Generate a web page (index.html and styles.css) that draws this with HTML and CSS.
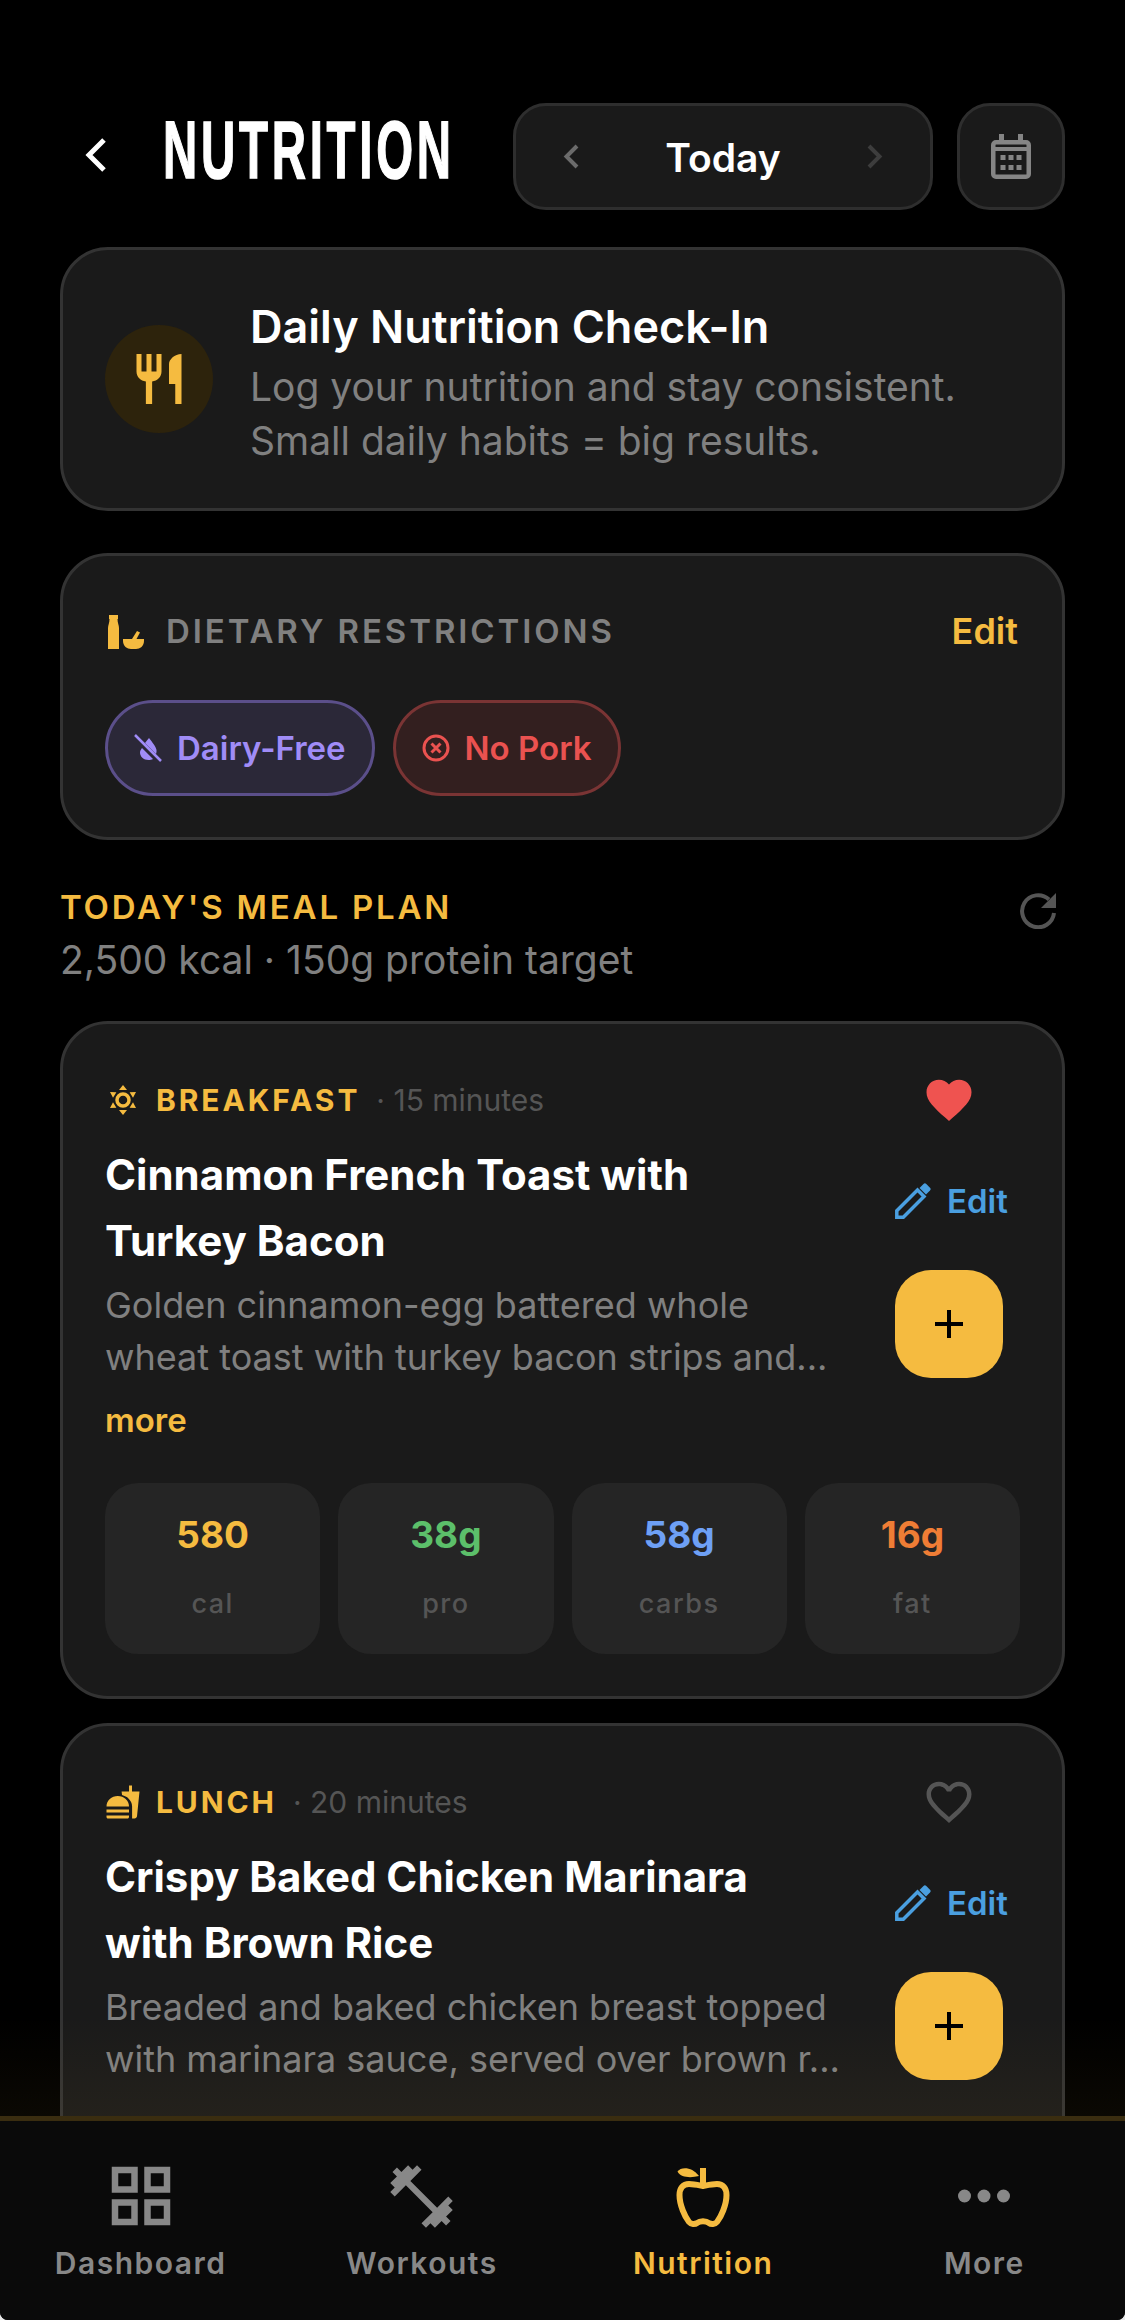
FILE: index.html
```html
<!DOCTYPE html>
<html lang="en">
<head>
<meta charset="utf-8">
<title>Nutrition</title>
<link rel="stylesheet" href="styles.css">
</head>
<body>
<div class="app">
  <main class="main">
    <header class="header">
      <svg class="back" viewBox="0 0 21 34"><path d="M19 2 4 17l15 15"/></svg>
      <div class="page-title"><h1>NUTRITION</h1></div>
      <div class="date-pill">
        <svg class="chev" viewBox="0 0 16 25"><path d="M14 2 3.500 12.500 14 23"/></svg>
        <span class="today">Today</span>
        <svg class="chev chev-off" viewBox="0 0 16 25"><path d="M2 2l10.500 10.500L2 23"/></svg>
      </div>
      <div class="cal-btn">
        <svg class="cal" viewBox="0 0 40 45"><path class="cal-fill" d="M8 0h5v6h14V0h5v6h3a5 5 0 0 1 5 5v29a5 5 0 0 1-5 5H5a5 5 0 0 1-5-5V11a5 5 0 0 1 5-5h3zM4.500 17v23a.5.5 0 0 0 .5.5h30a.5.5 0 0 0 .5-.5V17zM5 10.500a.5.5 0 0 0-.5.5v2h31v-2a.5.5 0 0 0-.5-.5z"/><path class="cal-fill" d="M9.500 21h5v5h-5zM17.500 21h5v5h-5zM25.500 21h5v5h-5zM9.500 31h5v5h-5zM17.500 31h5v5h-5zM25.500 31h5v5h-5z"/></svg>
      </div>
    </header>

    <section class="card checkin">
      <div class="checkin-icon">
        <svg class="fork" viewBox="0 0 24 24"><path d="M11 9H9V2H7v7H5V2H3v7c0 2.120 1.660 3.840 3.750 3.970V22h2.500v-9.030C11.340 12.840 13 11.120 13 9V2h-2v7zm5-3v8h2.500v8H21V2c-2.760 0-5 2.240-5 4z"/></svg>
      </div>
      <div>
        <h2 class="checkin-title">Daily Nutrition Check-In</h2>
        <p class="checkin-sub">Log your nutrition and stay consistent.<br>Small daily habits = big results.</p>
      </div>
    </section>

    <section class="card diet">
      <div class="diet-head">
        <svg class="diet-icon" viewBox="0 0 36 34"><path d="M1 0h9v4h-.5c0 4 1.500 6 1.500 9v21H0V13c0-3 1.500-5 1.500-9H1z"/><path d="M15 24h21v2c0 5-4 8-8 8h-5c-4 0-8-3-8-8z"/><path d="M24 24l5-8 3 1.500-3.500 6.500z"/></svg>
        <span class="diet-label">DIETARY RESTRICTIONS</span>
        <span class="diet-edit">Edit</span>
      </div>
      <div class="chips">
        <span class="chip chip-purple">
          <svg class="chip-icon" viewBox="0 0 28 28"><path class="drop" d="M15 4c3 4 7 8.500 7.500 12 .2 1.500 0 2.800-.5 4L11 9c1.200-1.700 2.700-3.300 4-5zM8 14l11 11c-1.300.8-2.800 1-4.500 1C9.500 26 6 22.500 6 18.500c0-1.500.8-3 2-4.500z"/><path class="slash" d="M1 1l26 26"/></svg>
          Dairy-Free
        </span>
        <span class="chip chip-red">
          <svg class="chip-icon" viewBox="0 0 28 28"><circle class="ring" cx="14" cy="14" r="12"/><path class="cross" d="M9.500 9.500l9 9M18.500 9.500l-9 9"/></svg>
          No Pork
        </span>
      </div>
    </section>

    <div class="plan-head">
      <div>
        <h3 class="plan-title">TODAY'S MEAL PLAN</h3>
        <p class="plan-sub">2,500 kcal · 150g protein target</p>
      </div>
      <svg class="refresh" viewBox="0 0 36 36"><path class="refresh-arc" d="M29 6.500A16 16 0 1 0 34 20"/><path class="refresh-tip" d="M36 0v15H21z"/></svg>
    </div>

    <article class="card meal">
      <div class="meal-top">
        <div class="meal-body">
          <div class="meal-tag">
            <svg class="tag-icon" viewBox="0 0 30 30">
              <circle class="sun-ring" cx="15" cy="15" r="6"/>
              <path class="sun-ray" d="M15 0l4 5h-8zM15 30l-4-5h8zM2 7l6.400.3-3.400 5.400zM28 7l-3 5.700-3.400-5.400zM2 23l3-5.700 3.400 5.400zM28 23l-6.400-.3 3.400-5.400z"/>
            </svg>
            <span class="tag-name">BREAKFAST</span>
            <span class="tag-time">· 15 minutes</span>
          </div>
          <h4 class="meal-title">Cinnamon French Toast with Turkey Bacon</h4>
          <p class="meal-desc">Golden cinnamon-egg battered whole wheat toast with turkey bacon strips and...</p>
          <span class="more">more</span>
        </div>
        <div class="meal-actions">
          <div class="heart-box"><svg class="heart heart-on" viewBox="0 0 24 24"><path d="M12 21.350l-1.450-1.320C5.400 15.360 2 12.280 2 8.500 2 5.420 4.420 3 7.500 3c1.740 0 3.410.810 4.500 2.090C13.090 3.810 14.760 3 16.500 3 19.580 3 22 5.420 22 8.500c0 3.780-3.400 6.860-8.550 11.540L12 21.350z"/></svg></div>
          <div class="meal-edit">
            <svg class="pencil" viewBox="0 0 36 36"><path class="pencil-body" d="M1.800 34.200v-6.500L22.500 7l6.500 6.500-20.700 20.700z"/><path class="pencil-cap" d="M24.500 5 28.500 1a2 2 0 0 1 2.800 0l3.700 3.700a2 2 0 0 1 0 2.800L31 11.500z"/></svg>
            <span>Edit</span>
          </div>
          <button class="add" type="button"><svg class="plus" viewBox="0 0 28 28"><path d="M14 0v28M0 14h28"/></svg></button>
        </div>
      </div>
      <div class="macros">
        <div class="macro"><b class="v-cal">580</b><span>cal</span></div>
        <div class="macro"><b class="v-pro">38g</b><span>pro</span></div>
        <div class="macro"><b class="v-carb">58g</b><span>carbs</span></div>
        <div class="macro"><b class="v-fat">16g</b><span>fat</span></div>
      </div>
    </article>

    <article class="card meal meal-next">
      <div class="meal-top">
        <div class="meal-body">
          <div class="meal-tag">
            <svg class="tag-icon tag-icon-wide" viewBox="0 0 24 24"><path d="M18.060 23h1.660c.840 0 1.530-.640 1.630-1.460L23 5.050h-5V1h-1.970v4.050h-4.970l.300 2.340c1.710.470 3.310 1.310 4.270 2.260 1.440 1.420 2.430 2.890 2.430 5.290zM1 15c0-4 3.400-7 7.500-7s7.530 3 7.530 7zM1 17h15v2H1zM1 21h15v1c0 .550-.450 1-1 1H2c-.550 0-1-.450-1-1z"/></svg>
            <span class="tag-name">LUNCH</span>
            <span class="tag-time">· 20 minutes</span>
          </div>
          <h4 class="meal-title">Crispy Baked Chicken Marinara with Brown Rice</h4>
          <p class="meal-desc">Breaded and baked chicken breast topped with marinara sauce, served over brown r...</p>
          <span class="more">more</span>
        </div>
        <div class="meal-actions">
          <div class="heart-box"><svg class="heart heart-off" viewBox="0 0 24 24"><path d="M16.500 3c-1.740 0-3.410.810-4.500 2.090C10.910 3.810 9.240 3 7.500 3 4.420 3 2 5.420 2 8.500c0 3.780 3.400 6.860 8.550 11.540L12 21.350l1.450-1.320C18.600 15.360 22 12.280 22 8.500 22 5.420 19.580 3 16.500 3zm-4.400 15.550l-.1.100-.1-.1C7.140 14.240 4 11.390 4 8.500 4 6.500 5.500 5 7.500 5c1.540 0 3.040.990 3.570 2.360h1.870C13.460 5.990 14.960 5 16.500 5c2 0 3.500 1.500 3.500 3.500 0 2.890-3.140 5.740-7.900 10.050z"/></svg></div>
          <div class="meal-edit">
            <svg class="pencil" viewBox="0 0 36 36"><path class="pencil-body" d="M1.800 34.200v-6.500L22.500 7l6.500 6.500-20.700 20.700z"/><path class="pencil-cap" d="M24.500 5 28.500 1a2 2 0 0 1 2.800 0l3.700 3.700a2 2 0 0 1 0 2.800L31 11.500z"/></svg>
            <span>Edit</span>
          </div>
          <button class="add" type="button"><svg class="plus" viewBox="0 0 28 28"><path d="M14 0v28M0 14h28"/></svg></button>
        </div>
      </div>
    </article>

    <div class="fade"></div>
  </main>

  <nav class="nav">
    <div class="nav-item">
      <svg class="nav-icon" viewBox="0 0 24 24"><path d="M3 3v8h8V3H3zm6 6H5V5h4v4zm-6 4v8h8v-8H3zm6 6H5v-4h4v4zm4-16v8h8V3h-8zm6 6h-4V5h4v4zm-6 4v8h8v-8h-8zm6 6h-4v-4h4v4z"/></svg>
      <span>Dashboard</span>
    </div>
    <div class="nav-item">
      <svg class="nav-icon nav-icon-dumb" viewBox="0 0 24 24"><path d="M20.570 14.860L22 13.430 20.570 12 17 15.570 8.430 7 12 3.430 10.570 2 9.140 3.430 7.710 2 5.570 4.140 4.140 2.710 2.710 4.140l1.430 1.430L2 7.710l1.430 1.430L2 10.570 3.430 12 7 8.430 15.570 17 12 20.570 13.430 22l1.430-1.430L16.290 22l2.140-2.140 1.430 1.430 1.430-1.430-1.430-1.430L22 16.290z"/></svg>
      <span>Workouts</span>
    </div>
    <div class="nav-item nav-active">
      <svg class="nav-icon" viewBox="0 0 78 78"><path class="apple-leaf" d="M13.500 14.500C17 9.500 28 9.500 35 19C27 21 17 21 13.500 14.500z"/><path class="apple-stem" d="M39 11v18"/><path class="apple-body" d="M39 29C34 28 30 27 25 27C19 27 15.500 31 15.500 38C15.500 48 21 60 25 65C27 67.500 31 67.500 33 66C36 63.500 42 63.500 45 66C47 67.500 51 67.500 53 65C57 60 62.500 48 62.500 38C62.500 31 59 27 53 27C48 27 44 28 39 29Z"/></svg>
      <span>Nutrition</span>
    </div>
    <div class="nav-item">
      <svg class="nav-icon" viewBox="0 0 24 24"><circle cx="6" cy="12" r="2"/><circle cx="12" cy="12" r="2"/><circle cx="18" cy="12" r="2"/></svg>
      <span>More</span>
    </div>
  </nav>
</div>
</body>
</html>
```

FILE: styles.css
```css
* { box-sizing: border-box; margin: 0; padding: 0; }
html { background: #e8e8e8; }
body {
  width: 1125px;
  height: 2320px;
  background: #000;
  font-family: "Inter", "Liberation Sans", sans-serif;
  overflow: hidden;
  border-radius: 0 0 8px 8px;
}
.app { height: 2320px; display: flex; flex-direction: column; }
.main { flex: 1; min-height: 0; overflow: hidden; position: relative; padding: 103px 60px 0; }

/* header */
.header { display: flex; align-items: center; height: 107px; margin-bottom: 37px; }
.back { width: 21px; height: 34px; margin-left: 25px; margin-top: -4px; fill: none; stroke: #fff; stroke-width: 5; flex: none; }
.page-title { width: 350px; margin-left: 57px; flex: none; height: 107px; display: flex; align-items: center; margin-top: -13px; }
.page-title h1 {
  font-family: "Liberation Sans", sans-serif;
  font-weight: 700;
  font-size: 82px;
  line-height: 1;
  white-space: nowrap;
  letter-spacing: 6.500px;
  color: #fff;
  -webkit-text-stroke: 1.500px #fff;
  transform: scaleX(0.578);
  transform-origin: left center;
}
.date-pill {
  width: 420px; height: 107px; flex: none;
  display: flex; align-items: center; justify-content: space-between;
  padding: 0 47px;
  background: #1a1a1a; border: 3px solid #2e2e2e; border-radius: 33px;
}
.chev { width: 16px; height: 25px; fill: none; stroke: #6b6b6b; stroke-width: 4; }
.chev-off { stroke: #3d3d3d; }
.today { color: #fff; font-size: 39px; font-weight: 600; position: relative; top: 1px; }
.cal-btn {
  width: 108px; height: 107px; flex: none; margin-left: 24px;
  display: flex; align-items: center; justify-content: center;
  background: #1a1a1a; border: 3px solid #2e2e2e; border-radius: 33px;
}
.cal { width: 40px; height: 45px; fill: #858585; }

/* cards */
.card { background: #1a1a1a; border: 3px solid #333; border-radius: 48px; }
.checkin { display: flex; height: 264px; padding: 47px 42px 0; margin-bottom: 42px; }
.checkin-icon {
  width: 108px; height: 108px; flex: none; margin-top: 28px; margin-right: 37px;
  border-radius: 50%; background: #2d230c;
  display: flex; align-items: center; justify-content: center;
}
.fork { width: 60px; height: 60px; fill: #f5bb40; }
.checkin-title { color: #fff; font-size: 45px; font-weight: 600; line-height: 60px; }
.checkin-sub { color: #808080; font-size: 39px; line-height: 54px; margin-top: 3px; }

.diet { height: 287px; padding: 45px 42px 0; margin-bottom: 43px; }
.diet-head { display: flex; align-items: center; height: 60px; margin-bottom: 39px; }
.diet-icon { width: 36px; height: 34px; fill: #f5bb40; flex: none; margin-left: 3px; margin-top: 2px; }
.diet-label { color: #808080; font-size: 33px; font-weight: 600; letter-spacing: 2.900px; margin-left: 22px; }
.diet-edit { margin-left: auto; color: #f5bb40; font-size: 36px; font-weight: 600; margin-right: 2px; }
.chips { display: flex; gap: 18px; }
.chip {
  display: flex; align-items: center; height: 96px; padding: 0 26px;
  border-radius: 48px; border: 3px solid; font-size: 33px; font-weight: 600; gap: 15px;
}
.chip-icon { width: 28px; height: 28px; flex: none; }
.chip-purple { background: #2b2838; border-color: #5b4f8a; color: #a08cf7; }
.chip-purple .drop { fill: #a08cf7; }
.chip-purple .slash { stroke: #a08cf7; stroke-width: 2.500; }
.chip-red { background: #331f1f; border-color: #7a3434; color: #ea5250; }
.chip-red .ring { fill: none; stroke: #ea5250; stroke-width: 3; }
.chip-red .cross { fill: none; stroke: #ea5250; stroke-width: 3; }

.plan-head { display: flex; justify-content: space-between; align-items: flex-start; margin-bottom: 34px; }
.plan-title { color: #f5bb40; font-size: 33px; font-weight: 600; letter-spacing: 2.800px; line-height: 46px; position: relative; top: 1px; }
.plan-sub { color: #808080; font-size: 39px; line-height: 54px; margin-top: 4px; }
.refresh { width: 36px; height: 36px; margin-top: 10px; margin-right: 9px; }
.refresh-arc { fill: none; stroke: #555; stroke-width: 4; }
.refresh-tip { fill: #555; }

/* meal cards */
.meal { padding: 49px 42px 42px; margin-bottom: 24px; }
.meal-top { display: flex; }
.meal-body { width: 735px; flex: none; }
.meal-tag { display: flex; align-items: center; height: 54px; }
.tag-icon { width: 30px; height: 30px; fill: #f5bb40; margin-left: 3px; flex: none; }
.tag-icon-wide { width: 36px; height: 36px; margin-left: 0; margin-right: -3px; }
.sun-ring { fill: none; stroke: #f5bb40; stroke-width: 3.500; }
.sun-ray { fill: #f5bb40; }
.tag-name { color: #f5bb40; font-size: 30px; font-weight: 700; letter-spacing: 2.900px; margin-left: 18px; }
.tag-time { color: #555; font-size: 30px; margin-left: 16px; }
.meal-title { color: #fff; font-size: 42px; font-weight: 700; line-height: 66px; margin-top: 15px; }
.meal-desc { color: #808080; font-size: 36px; line-height: 51.500px; margin-top: 6px; }
.more { display: block; color: #f5bb40; font-size: 33px; font-weight: 600; line-height: 46px; margin-top: 14px; }
.meal-actions { margin-left: 55px; width: 125px; flex: none; display: flex; flex-direction: column; align-items: flex-start; }
.heart-box { width: 108px; height: 54px; display: flex; justify-content: center; }
.heart { width: 54px; height: 54px; }
.heart-on { fill: #ef5350; }
.heart-off { fill: #555; }
.meal-edit { display: flex; align-items: center; gap: 16px; height: 40px; margin-top: 54px; color: #4a9fe0; font-size: 33px; font-weight: 600; }
.pencil { width: 36px; height: 36px; flex: none; }
.pencil-body { fill: none; stroke: #4a9fe0; stroke-width: 3.500; }
.pencil-cap { fill: #4a9fe0; }
.add {
  width: 108px; height: 108px; margin-top: 49px; border: 0; border-radius: 36px;
  background: #f5bb40; display: flex; align-items: center; justify-content: center;
}
.plus { width: 28px; height: 28px; fill: none; stroke: #000; stroke-width: 4; }

.macros { display: grid; grid-template-columns: repeat(4, 1fr); gap: 18px; margin-top: 40px; }
.macro {
  height: 171px; background: #252525; border-radius: 33px;
  display: flex; flex-direction: column; align-items: center; padding-top: 28px;
}
.macro b { font-size: 37px; font-weight: 700; line-height: 48px; }
.macro span { color: #555; font-size: 27px; font-weight: 500; letter-spacing: 1.500px; line-height: 40px; margin-top: 25px; }
.v-cal { color: #f5bb40; }
.v-pro { color: #5cbf6a; }
.v-carb { color: #6ea0f5; }
.v-fat { color: #ef7d35; }

.fade {
  position: absolute; left: 0; right: 0; bottom: 0; height: 100px;
  background: linear-gradient(to bottom, rgba(245,187,64,0), rgba(245,187,64,0.045));
  pointer-events: none;
}

/* bottom nav */
.nav { height: 204px; flex: none; display: flex; background: #0a0a0a; border-top: 5px solid #3a2d10; padding-top: 36px; }
.nav-item { flex: 1; display: flex; flex-direction: column; align-items: center; color: #888; font-size: 30px; font-weight: 600; letter-spacing: 1.500px; }
.nav-item span { line-height: 40px; margin-top: 8px; }
.nav-icon { width: 78px; height: 78px; fill: #888; flex: none; }
.nav-icon-dumb { width: 75px; height: 75px; margin: 1.500px 0; }
.nav-active { color: #f5bb40; }
.apple-leaf { fill: #f5bb40; }
.apple-stem { fill: none; stroke: #f5bb40; stroke-width: 6; }
.apple-body { fill: none; stroke: #f5bb40; stroke-width: 6; }
```
